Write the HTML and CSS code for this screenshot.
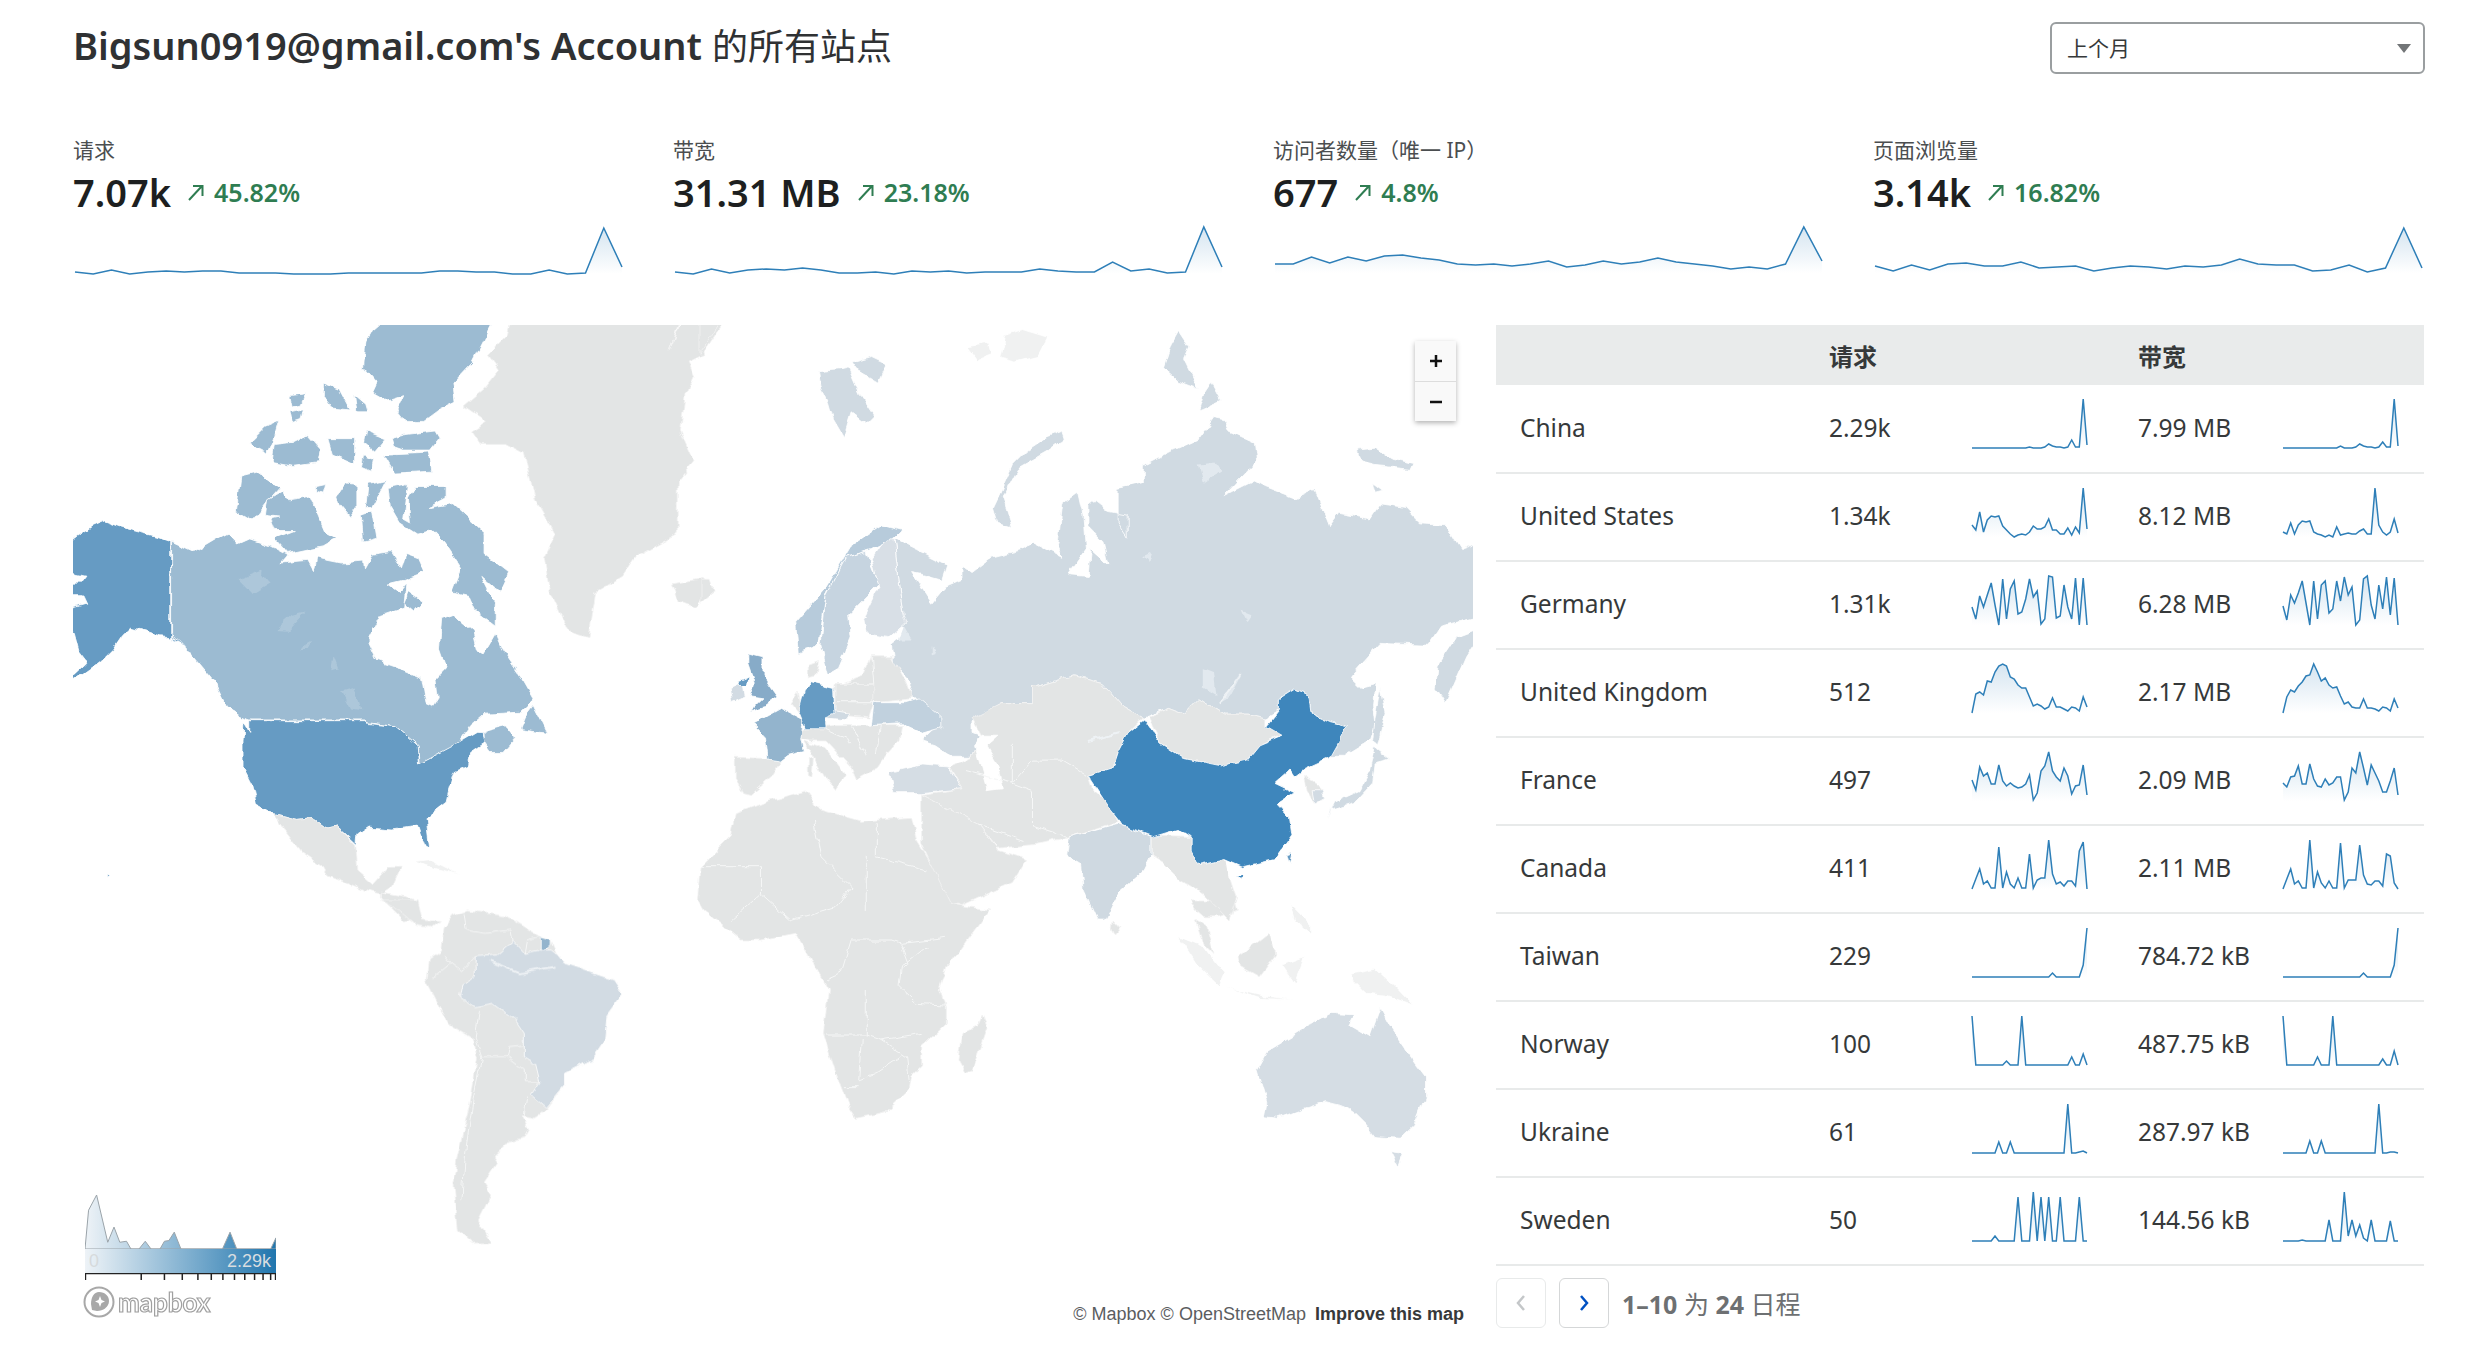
FILE: index.html
```html
<!DOCTYPE html>
<html lang="zh-CN">
<head>
  <meta charset="UTF-8">
  <title>Bigsun0919@gmail.com's Account 的所有站点</title>
  <link rel="stylesheet" href="styles.css">
</head>
<body>

  <svg class="defs" width="0" height="0">
    <defs>
      <linearGradient id="spark-fill" x1="0" y1="0" x2="0" y2="1">
        <stop offset="0" stop-color="#2c7bb6" stop-opacity=".2"/>
        <stop offset="1" stop-color="#2c7bb6" stop-opacity="0"/>
      </linearGradient>
      <linearGradient id="legend-fill" x1="0" y1="0" x2="1" y2="0">
        <stop offset="0" stop-color="#eef3f7"/>
        <stop offset="1" stop-color="#2176ae"/>
      </linearGradient>
      <!-- roughens the hand-traced polygons into coastlines -->
      <filter id="coast" filterUnits="userSpaceOnUse" x="0" y="300" width="1600" height="1100" color-interpolation-filters="sRGB">
        <feTurbulence type="fractalNoise" baseFrequency=".085" numOctaves="2" seed="4"/>
        <feDisplacementMap in="SourceGraphic" scale="7" xChannelSelector="R" yChannelSelector="G"/>
      </filter>
    </defs>
  </svg>

  <header class="top">
    <h1 class="title">Bigsun0919@gmail.com's Account <span class="title-cjk">的所有站点</span></h1>
    <div class="range">上个月<span class="range-caret"></span></div>
  </header>

  <section class="stats">
    <div class="stat">
      <div class="stat-label">请求</div>
      <div class="stat-row">
        <span class="stat-value">7.07k</span>
        <svg class="trend-arrow" width="18" height="18" viewBox="0 0 18 18"><path d="M2 17 15 3M6 3h9.500v10"/></svg>
        <span class="stat-change">45.82%</span>
      </div>
      <svg class="spark" width="548" height="50" data-base="47" data-v="1,-1,3,-1,1,2,1,2,2,0,0,0,-1,-1,-1,0,0,0,0,0,2,2,1,1,-1,-1,3,-1,0,45,6"></svg>
    </div>
    <div class="stat">
      <div class="stat-label">带宽</div>
      <div class="stat-row">
        <span class="stat-value">31.31 MB</span>
        <svg class="trend-arrow" width="18" height="18" viewBox="0 0 18 18"><path d="M2 17 15 3M6 3h9.500v10"/></svg>
        <span class="stat-change">23.18%</span>
      </div>
      <svg class="spark" width="548" height="50" data-base="47" data-v="1,-1,4,0,3,4,3,5,3,0,0,1,-1,2,1,2,0,1,1,1,4,2,1,1,11,2,4,0,1,46,6"></svg>
    </div>
    <div class="stat">
      <div class="stat-label">访问者数量（唯一 IP）</div>
      <div class="stat-row">
        <span class="stat-value">677</span>
        <svg class="trend-arrow" width="18" height="18" viewBox="0 0 18 18"><path d="M2 17 15 3M6 3h9.500v10"/></svg>
        <span class="stat-change">4.8%</span>
      </div>
      <svg class="spark" width="548" height="50" data-base="47" data-v="9,9,16,10,16,12,17,18,15,13,9,8,9,7,9,12,6,8,12,9,11,15,11,9,7,4,6,4,9,46,12"></svg>
    </div>
    <div class="stat">
      <div class="stat-label">页面浏览量</div>
      <div class="stat-row">
        <span class="stat-value">3.14k</span>
        <svg class="trend-arrow" width="18" height="18" viewBox="0 0 18 18"><path d="M2 17 15 3M6 3h9.500v10"/></svg>
        <span class="stat-change">16.82%</span>
      </div>
      <svg class="spark" width="548" height="50" data-base="47" data-v="7,2,8,3,9,10,7,7,11,5,6,7,2,5,7,6,4,7,6,8,14,9,8,8,2,3,8,1,5,45,5"></svg>
    </div>
  </section>

  <main class="content">
    <div class="map">
      <svg class="map-svg" width="1400" height="1010" viewBox="73 325 1400 1010">
        <g filter="url(#coast)">
        <!-- north america + greenland -->
        <g transform="translate(60 320) scale(.4464 .3827)">
          <polygon class="gray" points="1010,-5 1390,-5 1365,80 1395,-5 1495,-5 1440,90 1405,110 1420,150 1400,200 1390,290 1420,370 1385,420 1385,560 1290,620 1260,670 1200,710 1185,830 1140,815 1095,700 1085,620 1110,560 1065,470 1040,350 1000,325 940,325 920,290 955,265 905,225 950,180 985,130 960,90 1000,40"/>
          <polygon class="gray" points="1370,690 1440,675 1465,700 1420,750 1385,735"/>
          <polygon class="us" points="0,600 40,565 70,540 100,525 135,540 170,552 215,565 248,578 248,828 225,825 190,812 160,803 140,825 120,860 90,895 60,920 0,960 60,895 40,865 30,820 0,760 60,740 50,715 0,715 0,685 50,685 60,670 0,655"/>
          <polygon class="us" points="248,828 300,840 350,930 345,940 300,880 265,840"/>
          <polygon class="us" points="108,1448 115,1452 110,1458"/>
          <polygon class="ca" points="250,578 300,605 350,570 375,555 400,585 425,572 470,590 510,615 495,635 555,628 570,660 575,622 630,635 680,630 682,650 700,612 740,605 765,650 775,610 800,620 815,660 770,680 735,690 760,710 775,690 770,750 720,770 690,840 710,890 760,910 810,935 820,1000 835,1008 845,990 840,940 865,910 850,860 855,780 880,770 925,815 935,860 950,870 975,820 990,860 1040,945 1062,990 1030,1025 950,1030 920,1060 890,1110 845,1135 805,1160 800,1110 750,1060 690,1050 685,1045 425,1045 410,1040 375,1010 350,950 300,880 265,835 250,825"/>
          <polygon class="ca" points="950,1075 1000,1060 1020,1090 990,1130 965,1130 950,1105"/>
          <polygon class="ca" points="1040,1040 1060,1010 1090,1080 1030,1070"/>
          <polygon class="ca" points="700,30 735,-5 975,-5 925,110 880,165 885,215 850,235 815,265 775,265 755,235 770,195 730,210 700,190 710,165 680,125 685,60"/>
          <polygon class="ca" points="740,310 770,300 840,290 850,310 830,340 770,340 745,330"/>
          <polygon class="ca" points="740,350 830,345 835,395 750,400 725,350"/>
          <polygon class="ca" points="590,165 625,180 650,235 610,230 590,200"/>
          <polygon class="ca" points="660,195 685,220 690,240 665,240"/>
          <polygon class="ca" points="425,320 460,280 490,265 480,310 465,350 440,335"/>
          <polygon class="ca" points="480,325 520,320 555,300 585,340 580,370 520,380 475,370"/>
          <polygon class="ca" points="600,310 660,310 660,375 610,350"/>
          <polygon class="ca" points="515,200 550,195 540,220 520,225"/>
          <polygon class="ca" points="515,240 545,232 540,260 520,268"/>
          <polygon class="ca" points="685,290 730,310 705,345 680,320"/>
          <polygon class="ca" points="680,355 700,365 695,395 675,385"/>
          <polygon class="ca" points="405,410 440,400 490,440 460,480 430,525 395,500"/>
          <polygon class="ca" points="465,470 500,445 510,470 560,460 595,555 620,570 590,590 510,610 480,570 525,550 480,550 470,520 490,515 460,510"/>
          <polygon class="ca" points="575,435 595,430 590,455 575,450"/>
          <polygon class="ca" points="620,460 640,425 665,430 665,490 650,515 625,480"/>
          <polygon class="ca" points="690,430 730,420 700,490 685,490"/>
          <polygon class="ca" points="735,440 780,430 770,520 785,530 780,465 795,435 865,435 865,465 825,490 880,480 950,555 950,610 1005,660 985,710 945,670 975,740 975,800 930,760 915,720 880,710 900,650 860,580 835,550 800,560 760,530 740,490"/>
          <polygon class="ca" points="675,510 700,500 710,570 680,580"/>
          <polygon class="ca" points="780,710 810,735 790,760 770,740"/>
          <polygon class="us" points="412,1050 425,1075 425,1047 685,1047 690,1052 750,1060 800,1110 803,1160 845,1135 885,1110 935,1075 948,1075 952,1105 920,1130 915,1165 885,1180 870,1235 865,1260 820,1300 828,1380 815,1370 800,1320 740,1330 690,1325 665,1345 663,1370 640,1345 620,1325 600,1330 565,1300 530,1305 480,1290 440,1265 430,1215 410,1170 410,1100"/>
          <polygon class="gray" points="480,1290 530,1305 565,1300 600,1330 620,1325 660,1370 665,1440 700,1475 735,1430 765,1430 745,1480 720,1500 680,1490 600,1450 590,1430 540,1390 500,1330"/>
          <polygon class="gray" points="720,1495 790,1510 800,1560 770,1568 720,1510"/>
          <polygon class="pale" points="795,1415 830,1410 880,1440 900,1450 830,1430"/>
          <path class="lake" d="M400 680l50-22 20 30-40 28zM480 810l40-40 30-8-40 50zM535 860l30-20-10 20zM630 970l30-10 15 60-25-5zM615 880l10 30-15 5z"/>
        </g>

        <!-- africa, australia, islands -->
        <g transform="translate(700 900) scale(.5038 .3333)">
          <polygon class="gray" points="0,-98 60,-190 70,-259 130,-293 210,-328 240,-270 320,-236 420,-248 430,-179 510,15 575,30 540,100 490,200 475,265 487,320 487,375 440,440 440,500 420,530 415,570 370,635 310,655 295,620 270,520 245,400 255,270 225,190 190,100 120,120 80,120 6,30 -5,0"/>
          <polygon class="gray" points="560,345 570,380 540,510 525,518 512,480 520,400 550,380"/>
          <polygon class="aus" points="1250,340 1300,345 1290,375 1330,410 1350,325 1370,380 1420,490 1440,530 1440,590 1415,680 1390,715 1340,710 1320,670 1300,640 1280,620 1240,605 1190,630 1145,655 1120,650 1125,610 1105,510 1125,455 1180,405 1220,365"/>
          <polygon class="aus" points="1370,755 1395,760 1385,800"/>
          <polygon class="pale" points="1290,220 1340,205 1380,260 1415,315 1360,285 1320,280 1300,250"/>
          <polygon class="gray" points="1070,170 1130,100 1145,160 1110,230 1075,200"/>
          <polygon class="pale" points="950,110 1000,140 1040,220 1030,255 985,190"/>
          <polygon class="pale" points="1040,260 1110,285 1180,300 1110,295"/>
          <polygon class="pale" points="1155,195 1200,170 1180,250"/>
          <polygon class="pale" points="1170,10 1210,70 1210,100 1180,60"/>
          <polygon class="gray" points="820,60 835,85 825,105 818,85"/>
          <polygon class="gray" points="975,0 1060,0 1065,30 1030,50 1000,50 985,30"/>
          <polygon class="gray" points="985,60 1005,80 1020,160 1000,130"/>
          <path class="border" d="M0-100H120V-20M120-20L180 60 270 20 300-40 240-130 225-240M120-20 60 60M330-130V30M350-230V-130L450-90M300 120H380L400 130 490 115M300 120L280 220 250 240M450 140 400 200 395 260 430 310 485 315M250 405H330L360 420 440 400M330 270V410M360 420 410 470 415 540M320 420 315 540 350 520 400 470M285 560H315M400 130 415 190 400 210"/>
        </g>

        <!-- south america -->
        <g transform="translate(60 900) scale(.4464 .3333)">
          <polygon class="gray" points="720,0 800,0 810,60 850,65 830,85 800,75 760,30"/>
          <polygon class="gray" points="880,45 910,30 1000,50 1075,110 1100,120 1115,165 1130,190 1240,240 1260,280 1225,345 1220,420 1190,480 1130,520 1130,560 1090,630 1060,655 1035,650 1050,690 1040,715 1000,730 970,770 980,790 950,850 965,880 935,960 965,1028 925,1030 890,990 880,850 890,770 920,600 935,470 925,415 870,370 820,240 825,180 855,150 860,85"/>
          <polygon class="br" points="1015,125 1040,160 1075,150 1100,150 1115,165 1130,190 1240,240 1260,280 1225,345 1220,420 1190,480 1130,520 1130,560 1090,625 1055,585 1075,545 1065,490 1040,470 1040,400 1020,360 970,310 930,320 895,290 900,255 930,230 930,170 980,165"/>
          <polygon class="fr" points="1078,112 1100,120 1100,135 1085,152 1078,150"/>
          <path class="border" d="M905 40 910 90 950 100 1010 90 1015 125M1040 160 1045 120 1075 110M860 165 875 190 830 240M930 170 900 215 875 190M940 330 930 410 945 470 925 600 910 740 900 900M945 470 1000 470 1040 510 1040 545 1075 545M1000 470 1005 440 1040 435M1045 590 1040 650"/>
          <path class="river" d="M965 185 1030 220 1110 200"/>
        </g>

        <!-- eurasia -->
        <g transform="translate(700 320) scale(.5038 .3827)">
          <polygon class="gray" points="0,-5 45,-5 10,70 0,90"/>
          <polygon class="gray" points="0,680 20,680 28,710 0,740"/>
          <polygon class="ru" points="235,135 280,130 295,125 320,200 345,250 330,270 300,240 285,305 265,260 255,215 240,175"/>
          <polygon class="ru" points="300,110 340,95 372,115 355,165 310,130"/>
          <polygon class="pale" points="530,70 575,60 580,90 550,105"/>
          <polygon class="pale" points="605,40 640,25 690,45 670,95 625,110 595,100"/>
          <polygon class="ru" points="720,290 725,310 690,345 630,390 610,440 600,460 620,540 590,525 582,490 600,440 620,380 650,340 690,305"/>
          <polygon class="ru" points="950,30 970,70 960,100 990,180 950,160 920,125 935,65"/>
          <polygon class="ru" points="1015,160 1035,210 990,235 1000,190"/>
          <polygon class="ru" points="1305,340 1340,335 1370,360 1415,375 1410,390 1340,380 1310,370"/>
          <polygon class="ru" points="1335,425 1355,445 1340,450"/>
          <polygon class="ru" points="385,570 430,600 490,640 480,680 440,665 420,660 460,740 485,700 520,680 520,640 540,660 580,620 640,600 660,580 720,620 710,590 720,480 750,450 760,510 765,600 730,665 770,670 775,600 810,640 800,580 770,540 770,480 780,470 810,500 850,510 850,570 830,530 830,440 880,425 880,380 940,340 990,310 1020,255 1040,260 1050,290 1100,320 1105,370 1040,460 1100,420 1120,435 1180,465 1220,440 1250,540 1270,505 1330,520 1350,480 1400,490 1430,530 1480,535 1510,600 1560,575 1560,770 1470,800 1445,850 1350,845 1290,935 1310,960 1340,950 1335,1010 1340,1060 1330,1100 1280,1140 1250,1140 1285,1060 1250,1050 1215,1030 1210,980 1180,965 1150,990 1150,1020 1125,1040 1090,1030 1040,1030 990,990 960,1030 930,1015 880,1040 840,1010 800,950 740,930 660,960 660,1000 600,1000 540,1050 540,1080 560,1090 540,1140 500,1140 465,1110 440,1100 480,1050 430,990 410,990 420,950 385,900 380,850 410,820 395,780 405,770 395,680"/>
          <polygon class="ru" points="1560,800 1520,880 1480,1000 1460,960 1465,900 1500,830"/>
          <polygon class="ru" points="1350,960 1360,1030 1345,1110 1335,1100 1340,1040"/>
          <polygon class="ru" points="1340,1120 1370,1150 1340,1160 1335,1210 1300,1260 1250,1280 1245,1300 1260,1260 1310,1230 1330,1180"/>
          <path class="lake-ru" d="M990 380l35-5 10 20-35 30zM1075 760l20 10-10 20zM1000 910l20 10 5 60-25-20zM1070 925l5 5-20 50-25 20zM405 800l15 35h-25zM880 620l15-10-5 25zM460 850l10 20-10 5z"/>

          <polygon class="se" points="385,570 395,680 405,770 410,790 375,830 330,820 325,780 355,700 340,620 365,570"/>
          <polygon class="no" points="400,550 360,535 300,590 250,700 190,790 195,870 235,850 250,720 290,620 340,600 385,570"/>
          <polygon class="sw" points="250,720 290,620 330,605 355,690 295,770 300,830 275,910 255,925 240,850"/>

          <polygon class="gray" points="340,880 380,880 410,950 420,990 345,1000 270,1000 265,960 325,930"/>
          <polygon class="gray" points="200,1070 260,1060 400,1060 395,1100 370,1135 350,1170 310,1200 300,1170 250,1100 220,1100 200,1095"/>
          <polygon class="gray" points="268,950 345,950 345,1000 335,1040 268,1030"/>
          <polygon class="gray" points="215,900 235,890 230,930 215,935"/>
          <polygon class="gray" points="180,1000 195,970 205,1040"/>
          <polygon class="gray" points="205,1100 250,1120 290,1190 270,1230 250,1200 220,1130"/>
          <polygon class="gray" points="70,1140 165,1145 140,1195 100,1240 85,1235 70,1200"/>
          <polygon class="gray" points="215,1145 225,1150 222,1195 215,1190"/>
          <polygon class="ua" points="345,1000 410,1000 435,990 480,1040 480,1065 440,1080 400,1055 340,1060"/>
          <polygon class="ru" points="250,1015 300,1025 290,1045 250,1040"/>
          <polygon class="aus" points="375,1180 440,1160 490,1165 520,1225 440,1235 385,1235"/>
          <polygon class="uk" points="95,870 125,880 125,930 155,985 130,1010 100,1022 125,990 100,985 108,950 95,900"/>
          <polygon class="br" points="60,960 85,945 90,985 65,1000"/>
          <polygon class="us" points="75,945 95,935 92,955 78,955"/>
          <polygon class="fr" points="160,1015 205,1045 200,1095 205,1125 175,1135 160,1150 135,1145 130,1090 105,1055"/>
          <polygon class="us" points="220,945 265,960 268,1030 250,1040 250,1068 210,1068 195,1020 205,970"/>

          <polygon class="gray" points="540,1040 600,1000 660,1000 660,960 740,930 800,950 840,1010 880,1040 850,1080 830,1130 820,1170 770,1190 780,1230 810,1260 830,1310 735,1350 670,1370 590,1380 555,1320 440,1240 520,1225 495,1170 540,1140 560,1090"/>
          <polygon class="white" points="560,1085 595,1085 570,1115 590,1160 600,1225 570,1230 545,1110"/>
          <polygon class="gray" points="890,1040 930,1015 960,1030 990,990 1040,1030 1090,1030 1125,1040 1125,1060 1155,1080 1110,1110 1085,1150 1035,1165 960,1145 915,1105"/>
          <polygon class="gray" points="440,1240 555,1320 590,1385 650,1410 620,1470 520,1530 495,1520 440,1370 440,1300"/>
          <polygon class="gray" points="895,1345 975,1350 990,1425 1040,1410 1065,1510 1050,1568 1000,1500 950,1460 920,1420 895,1400"/>
          <polygon class="gray" points="1200,1190 1225,1210 1240,1250 1220,1265 1205,1230"/>
          <polygon class="br" points="1215,1230 1235,1230 1240,1250 1220,1265"/>
          <polygon class="in" points="735,1350 830,1315 895,1350 895,1400 880,1440 830,1500 805,1568 790,1568 760,1480 755,1420 730,1400"/>
          <polygon class="cn" points="883,1045 915,1105 960,1145 1035,1165 1085,1150 1110,1110 1155,1085 1125,1062 1150,1020 1150,990 1180,965 1210,980 1215,1030 1250,1050 1285,1060 1265,1110 1250,1145 1200,1175 1180,1195 1170,1175 1140,1210 1180,1235 1145,1265 1170,1300 1175,1345 1140,1410 1075,1430 1040,1410 990,1425 975,1385 975,1350 950,1330 900,1350 840,1320 810,1270 770,1190 820,1170 830,1130 850,1080"/>
          <polygon class="cn" points="1065,1455 1080,1450 1072,1465"/>
          <polygon class="us" points="1165,1395 1175,1390 1170,1420"/>
          <path class="border" d="M340 880 345 950M270 1000 345 1000M300 1060 330 1140M250 1070 300 1100M360 1060 350 1130M620 1110 620 1210 660 1150 720 1150 770 1190M660 1230 660 1320 730 1350M530 1180 620 1210 660 1230M555 1320 640 1360M250 1060 250 1040"/>
          <path class="river" d="M770 1100 830 1080M1030 1000 1075 925"/>
        </g>
        </g>
      </svg>

      <div class="zoom-ctl">
        <div class="zoom-btn"><svg width="14" height="14" viewBox="0 0 14 14"><path d="M7 1v12M1 7h12"/></svg></div>
        <div class="zoom-btn"><svg width="14" height="14" viewBox="0 0 14 14"><path d="M1 7h12"/></svg></div>
      </div>

      <div class="legend">
        <svg class="legend-hist" width="191" height="54" viewBox="57 885 428 160" preserveAspectRatio="none">
          <path d="M57 1045 65 930 83 885 100 980 108 1025 122 980 135 1025 150 1022 160 1045H178L192 1022 205 1045H225L235 1022 245 1020 257 995 272 1045H365L382 995 397 1045H473L485 1012V1045Z"/>
        </svg>
        <div class="legend-bar"><span class="legend-min">0</span><span>2.29k</span></div>
        <svg class="legend-axis" width="191" height="7" viewBox="57 0 428 7" preserveAspectRatio="none">
          <path d="M57 .5H485M58 0V7M183 0V7M235 0V7M275 0V7M310 0V7M340 0V7M366 0V7M392 0V7M415 0V7M437 0V7M456 0V7M473 0V7M484 0V7"/>
        </svg>
      </div>

      <div class="mapbox-logo">
        <svg width="32" height="32" viewBox="0 0 32 32"><circle class="logo-ring" cx="16" cy="16" r="14.500"/><path class="logo-blob" d="M16 6c6 0 10 4 10 9 0 6-6 10-12 10l-5-1-1-6c0-7 3-12 8-12z"/><path class="logo-star" d="M17 10l1.500 4 3.500 1.500-3.500 1.500-1.500 4-1.500-4-3.500-1.500 3.500-1.500z"/></svg>
        <span class="logo-word">mapbox</span>
      </div>

      <div class="attrib">© Mapbox © OpenStreetMap <b>Improve this map</b></div>
    </div>

    <div class="side">
      <table class="countries">
        <thead>
          <tr><th></th><th>请求</th><th></th><th>带宽</th><th></th></tr>
        </thead>
        <tbody>
          <tr>
            <td>China</td><td>2.29k</td>
            <td class="spark-cell"><svg class="spark" width="116" height="50" data-base="49" data-v="0,0,0,0,0,0,0,0,0,0,0,0,0,0,0,1,0,0,0,1,4,2,1,1,0,1,8,1,1,49,3"></svg></td>
            <td>7.99 MB</td>
            <td class="spark-cell"><svg class="spark" width="116" height="50" data-base="49" data-v="0,0,0,0,0,0,0,0,0,0,0,0,0,0,0,2,0,0,0,1,4,2,1,1,0,1,6,1,1,49,2"></svg></td>
          </tr>
          <tr>
            <td>United States</td><td>1.34k</td>
            <td class="spark-cell"><svg class="spark" width="116" height="50" data-base="49" data-v="12,7,25,5,17,21,20,21,11,7,3,0,2,3,2,5,11,8,8,10,18,7,7,3,3,9,2,10,4,49,8"></svg></td>
            <td>8.12 MB</td>
            <td class="spark-cell"><svg class="spark" width="116" height="50" data-base="49" data-v="5,3,14,3,12,16,15,16,5,3,2,0,2,0,10,2,3,4,3,3,6,8,3,3,49,12,5,2,5,18,4"></svg></td>
          </tr>
          <tr>
            <td>Germany</td><td>1.31k</td>
            <td class="spark-cell"><svg class="spark" width="116" height="50" data-base="49" data-v="18,6,29,18,30,42,20,0,46,6,36,44,11,13,26,46,28,34,1,6,49,48,7,9,40,18,6,47,0,47,0"></svg></td>
            <td>6.28 MB</td>
            <td class="spark-cell"><svg class="spark" width="116" height="50" data-base="49" data-v="19,5,30,22,32,44,22,0,44,6,40,44,12,16,44,24,48,30,38,0,5,46,49,20,6,40,16,48,10,47,0"></svg></td>
          </tr>
          <tr>
            <td>United Kingdom</td><td>512</td>
            <td class="spark-cell"><svg class="spark" width="116" height="50" data-base="49" data-v="0,19,21,18,32,31,41,47,49,47,36,34,28,25,25,16,7,9,7,4,6,15,6,6,4,2,6,5,2,16,6"></svg></td>
            <td>2.17 MB</td>
            <td class="spark-cell"><svg class="spark" width="116" height="50" data-base="49" data-v="0,16,23,21,27,31,37,38,49,41,32,35,28,25,26,17,9,11,6,5,5,14,5,5,4,2,6,5,2,14,5"></svg></td>
          </tr>
          <tr>
            <td>France</td><td>497</td>
            <td class="spark-cell"><svg class="spark" width="116" height="50" data-base="49" data-v="21,11,34,25,28,17,17,36,20,15,18,15,13,14,17,26,1,8,30,35,49,30,24,20,33,25,7,15,16,36,6"></svg></td>
            <td>2.09 MB</td>
            <td class="spark-cell"><svg class="spark" width="116" height="50" data-base="49" data-v="18,14,24,25,35,17,17,37,22,15,14,22,16,18,24,24,1,9,33,28,49,33,16,36,28,20,9,9,20,33,6"></svg></td>
          </tr>
          <tr>
            <td>Canada</td><td>411</td>
            <td class="spark-cell"><svg class="spark" width="116" height="50" data-base="49" data-v="0,10,20,5,8,1,1,42,1,17,5,1,11,1,1,35,1,9,11,11,49,15,5,7,3,8,8,3,38,47,0"></svg></td>
            <td>2.11 MB</td>
            <td class="spark-cell"><svg class="spark" width="116" height="50" data-base="49" data-v="0,10,20,5,8,1,1,49,1,17,6,1,8,1,1,46,1,9,9,9,44,14,5,4,8,8,3,35,33,6,0"></svg></td>
          </tr>
          <tr>
            <td>Taiwan</td><td>229</td>
            <td class="spark-cell"><svg class="spark" width="116" height="50" data-base="49" data-v="0,0,0,0,0,0,0,0,0,0,0,0,0,0,0,0,0,0,0,0,0,4,0,0,0,0,0,0,0,12,49"></svg></td>
            <td>784.72 kB</td>
            <td class="spark-cell"><svg class="spark" width="116" height="50" data-base="49" data-v="0,0,0,0,0,0,0,0,0,0,0,0,0,0,0,0,0,0,0,0,0,4,0,0,0,0,0,0,0,12,49"></svg></td>
          </tr>
          <tr>
            <td>Norway</td><td>100</td>
            <td class="spark-cell"><svg class="spark" width="116" height="50" data-base="49" data-v="49,0,0,0,0,0,0,0,0,4,0,0,0,49,0,0,0,0,0,0,0,0,0,0,0,0,8,0,0,11,0"></svg></td>
            <td>487.75 kB</td>
            <td class="spark-cell"><svg class="spark" width="116" height="50" data-base="49" data-v="49,0,0,0,0,0,0,0,0,8,0,0,0,49,0,0,0,0,0,0,0,0,0,0,0,0,6,0,0,14,0"></svg></td>
          </tr>
          <tr>
            <td>Ukraine</td><td>61</td>
            <td class="spark-cell"><svg class="spark" width="116" height="50" data-base="49" data-v="0,0,0,0,0,0,0,11,0,0,11,0,0,0,0,0,0,0,0,0,0,0,0,0,0,49,0,0,1,2,0"></svg></td>
            <td>287.97 kB</td>
            <td class="spark-cell"><svg class="spark" width="116" height="50" data-base="49" data-v="0,0,0,0,0,0,0,12,0,0,12,0,0,0,0,0,0,0,0,0,0,0,0,0,0,49,0,0,1,1,0"></svg></td>
          </tr>
          <tr>
            <td>Sweden</td><td>50</td>
            <td class="spark-cell"><svg class="spark" width="116" height="50" data-base="49" data-v="0,0,0,0,0,0,5,0,0,0,0,0,44,0,0,0,49,0,44,0,44,0,0,44,0,0,0,0,44,0,0"></svg></td>
            <td>144.56 kB</td>
            <td class="spark-cell"><svg class="spark" width="116" height="50" data-base="49" data-v="0,0,0,0,0,1,0,0,0,0,0,0,21,0,0,0,49,5,21,5,16,3,0,21,0,0,0,0,20,0,0"></svg></td>
          </tr>
        </tbody>
      </table>

      <div class="pager">
        <button class="page-btn page-btn-off" type="button"><svg width="12" height="20" viewBox="0 0 12 20"><path d="M9 3 3 10l6 7"/></svg></button>
        <button class="page-btn page-btn-next" type="button"><svg width="12" height="20" viewBox="0 0 12 20"><path d="M3 3l6 7-6 7"/></svg></button>
        <span class="page-info"><b>1–10</b> 为 <b>24</b> 日程</span>
      </div>
    </div>
  </main>

  <script>
    // draw every sparkline from its data-v list (pixels above the base line)
    document.querySelectorAll(".spark").forEach(svg => {
      const values = svg.dataset.v.split(",").map(Number);
      const width = Number(svg.getAttribute("width")) - 1;
      const base = Number(svg.dataset.base);
      const step = width / (values.length - 1);
      const points = values.map((v, i) => (i * step).toFixed(1) + "," + (base - v));
      svg.innerHTML =
        `<polygon class="spark-area" points="0,${base} ${points.join(" ")} ${width},${base}"/>` +
        `<polyline class="spark-line" points="${points.join(" ")}"/>`;
    });
  </script>

</body>
</html>
```

FILE: styles.css
```css
* {
  box-sizing: border-box;
}

html, body {
  height: 100%;
}

body {
  margin: 0;
  padding: 22px 50px 0 73px;
  overflow: hidden;
  background-color: #fff;
  color: #36393a;
  font-family: "Noto Sans", "Noto Sans CJK SC", sans-serif;
}

.defs {
  position: absolute;
}

/* header */

.top {
  display: flex;
  justify-content: space-between;
  align-items: flex-start;
  height: 52px;
}

.title {
  margin: 0;
  font-size: 38px;
  line-height: 46px;
  font-weight: 600;
  color: #2f3133;
}

.title-cjk {
  font-size: 36px;
  font-weight: 400;
}

.range {
  position: relative;
  width: 375px;
  height: 52px;
  margin-right: -1px;
  padding: 0 15px;
  border: 2px solid #9a9ea0;
  border-radius: 6px;
  font-size: 21px;
  line-height: 48px;
  color: #36393a;
}

.range-caret {
  position: absolute;
  right: 12px;
  top: 20px;
  border-top: 9px solid #727577;
  border-left: 7px solid transparent;
  border-right: 7px solid transparent;
}

/* stats */

.stats {
  display: grid;
  grid-template-columns: repeat(4, 548px);
  column-gap: 52px;
  margin-top: 62px;
  height: 189px;
}

.stat-label {
  font-size: 21px;
  line-height: 28px;
  color: #4b4e50;
}

.stat-row {
  display: flex;
  align-items: center;
  height: 40px;
  margin-top: 8px;
}

.stat-value {
  font-size: 38px;
  font-weight: 600;
  color: #1d1f20;
}

.trend-arrow {
  margin: 0 9px 0 16px;
}

.trend-arrow path {
  fill: none;
  stroke: #2f7d52;
  stroke-width: 2;
}

.stat-change {
  font-size: 25px;
  font-weight: 600;
  color: #2f7d52;
}

.spark {
  display: block;
  overflow: visible;
}

.stat .spark {
  margin-top: 14px;
  margin-left: 2px;
}

.spark-area {
  fill: url(#spark-fill);
}

.spark-line {
  fill: none;
  stroke: #2e7fb8;
  stroke-width: 1.5;
}

/* map */

.content {
  display: flex;
  gap: 23px;
}

.map {
  position: relative;
  flex: 0 0 1400px;
  height: 1010px;
}

.map-svg {
  display: block;
}

.map-svg polygon {
  stroke: #fff;
  stroke-width: .8;
  stroke-linejoin: round;
  vector-effect: non-scaling-stroke;
}

.map-svg polygon.gray {
  stroke: #f2f3f3;
}

.gray { fill: #e3e5e5; }
.pale { fill: #f0f1f1; }
.map-svg polygon.white { fill: #fff; stroke: #fff; }
.ca { fill: #9cbbd2; }
.us { fill: #669bc3; }
.cn { fill: #3e86bc; }
.ru { fill: #d0dae2; }
.in { fill: #cfd9e1; }
.br { fill: #d2dbe3; }
.aus { fill: #d5dde4; }
.ua { fill: #c1d1de; }
.uk { fill: #87abc8; }
.fr { fill: #93b4cd; }
.no { fill: #b7cbdb; }
.sw { fill: #c6d4e0; }
.se { fill: #d8dfe6; }

.lake { fill: #adc7da; }
.lake-ru { fill: #e2e9ef; }

.border {
  fill: none;
  stroke: #f6f7f7;
  stroke-width: 1;
  vector-effect: non-scaling-stroke;
}

.river {
  fill: none;
  stroke: #eef2f5;
  stroke-width: 2;
  vector-effect: non-scaling-stroke;
}

.zoom-ctl {
  position: absolute;
  left: 1342px;
  top: 16px;
  width: 41px;
  background-color: #f9f9f9;
  box-shadow: 0 2px 5px rgba(0, 0, 0, 0.3);
}

.zoom-btn {
  display: flex;
  justify-content: center;
  align-items: center;
  height: 40px;
}

.zoom-btn + .zoom-btn {
  border-top: 1px solid #ddd;
}

.zoom-btn path {
  fill: none;
  stroke: #111;
  stroke-width: 2.5;
}

.legend {
  position: absolute;
  left: 12px;
  top: 870px;
  width: 191px;
}

.legend-hist,
.legend-axis {
  display: block;
}

.legend-hist path {
  fill: url(#legend-fill);
  stroke: #9aa3a9;
  stroke-width: 1;
  vector-effect: non-scaling-stroke;
}

.legend-bar {
  display: flex;
  justify-content: space-between;
  align-items: center;
  height: 24px;
  padding: 0 5px 0 4px;
  background: linear-gradient(to right, #eef3f7, #2176ae);
  font-family: "Liberation Sans", sans-serif;
  font-size: 18px;
  color: #d8dde0;
}

.legend-min {
  color: #d6dadc;
}

.legend-axis path {
  fill: none;
  stroke: #222;
  stroke-width: 1.5;
  vector-effect: non-scaling-stroke;
}

.mapbox-logo {
  position: absolute;
  left: 10px;
  top: 961px;
  display: flex;
  align-items: center;
  gap: 3px;
}

.logo-ring {
  fill: #fff;
  stroke: #a8a8a8;
  stroke-width: 2;
}

.logo-blob {
  fill: #a8a8a8;
}

.logo-star {
  fill: #fff;
}

.logo-word {
  font-family: "Lato", sans-serif;
  font-size: 26px;
  line-height: 30px;
  font-weight: 700;
  color: #fff;
  -webkit-text-stroke: 1.2px #a0a0a0;
}

.attrib {
  position: absolute;
  right: 9px;
  top: 979px;
  font-family: "Liberation Sans", sans-serif;
  font-size: 18px;
  line-height: 20px;
  color: #5b5d5f;
}

.attrib b {
  margin-left: 4px;
  color: #37393a;
}

/* country table */

.side {
  flex: 0 0 928px;
}

.countries {
  width: 928px;
  border-collapse: collapse;
  table-layout: fixed;
}

.countries th:nth-child(1) { width: 309px; }
.countries th:nth-child(2) { width: 143px; }
.countries th:nth-child(3) { width: 166px; }
.countries th:nth-child(4) { width: 145px; }
.countries th:nth-child(5) { width: 165px; }

.countries th {
  height: 60px;
  padding: 0 0 0 24px;
  background-color: #e9ebeb;
  font-size: 24px;
  font-weight: 700;
  text-align: left;
  color: #36393a;
}

.countries td {
  height: 88px;
  padding: 0 0 3px 24px;
  border-bottom: 2px solid #e8eaea;
  font-size: 24.500px;
  color: #36393a;
}

.countries td.spark-cell {
  padding-top: 14px;
  vertical-align: top;
}

.pager {
  display: flex;
  align-items: center;
  gap: 13px;
  margin-top: 12px;
}

.page-btn {
  display: flex;
  justify-content: center;
  align-items: center;
  width: 50px;
  height: 50px;
  padding: 0;
  border: 1px solid #d5d7d8;
  border-radius: 6px;
  background-color: #fff;
}

.page-btn path {
  fill: none;
  stroke-width: 2.5;
}

.page-btn-off {
  border-color: #e8eaea;
}

.page-btn-off path {
  stroke: #c4c7c9;
}

.page-btn-next path {
  stroke: #0051c3;
}

.page-info {
  font-size: 25px;
  color: #6d7072;
}
```
